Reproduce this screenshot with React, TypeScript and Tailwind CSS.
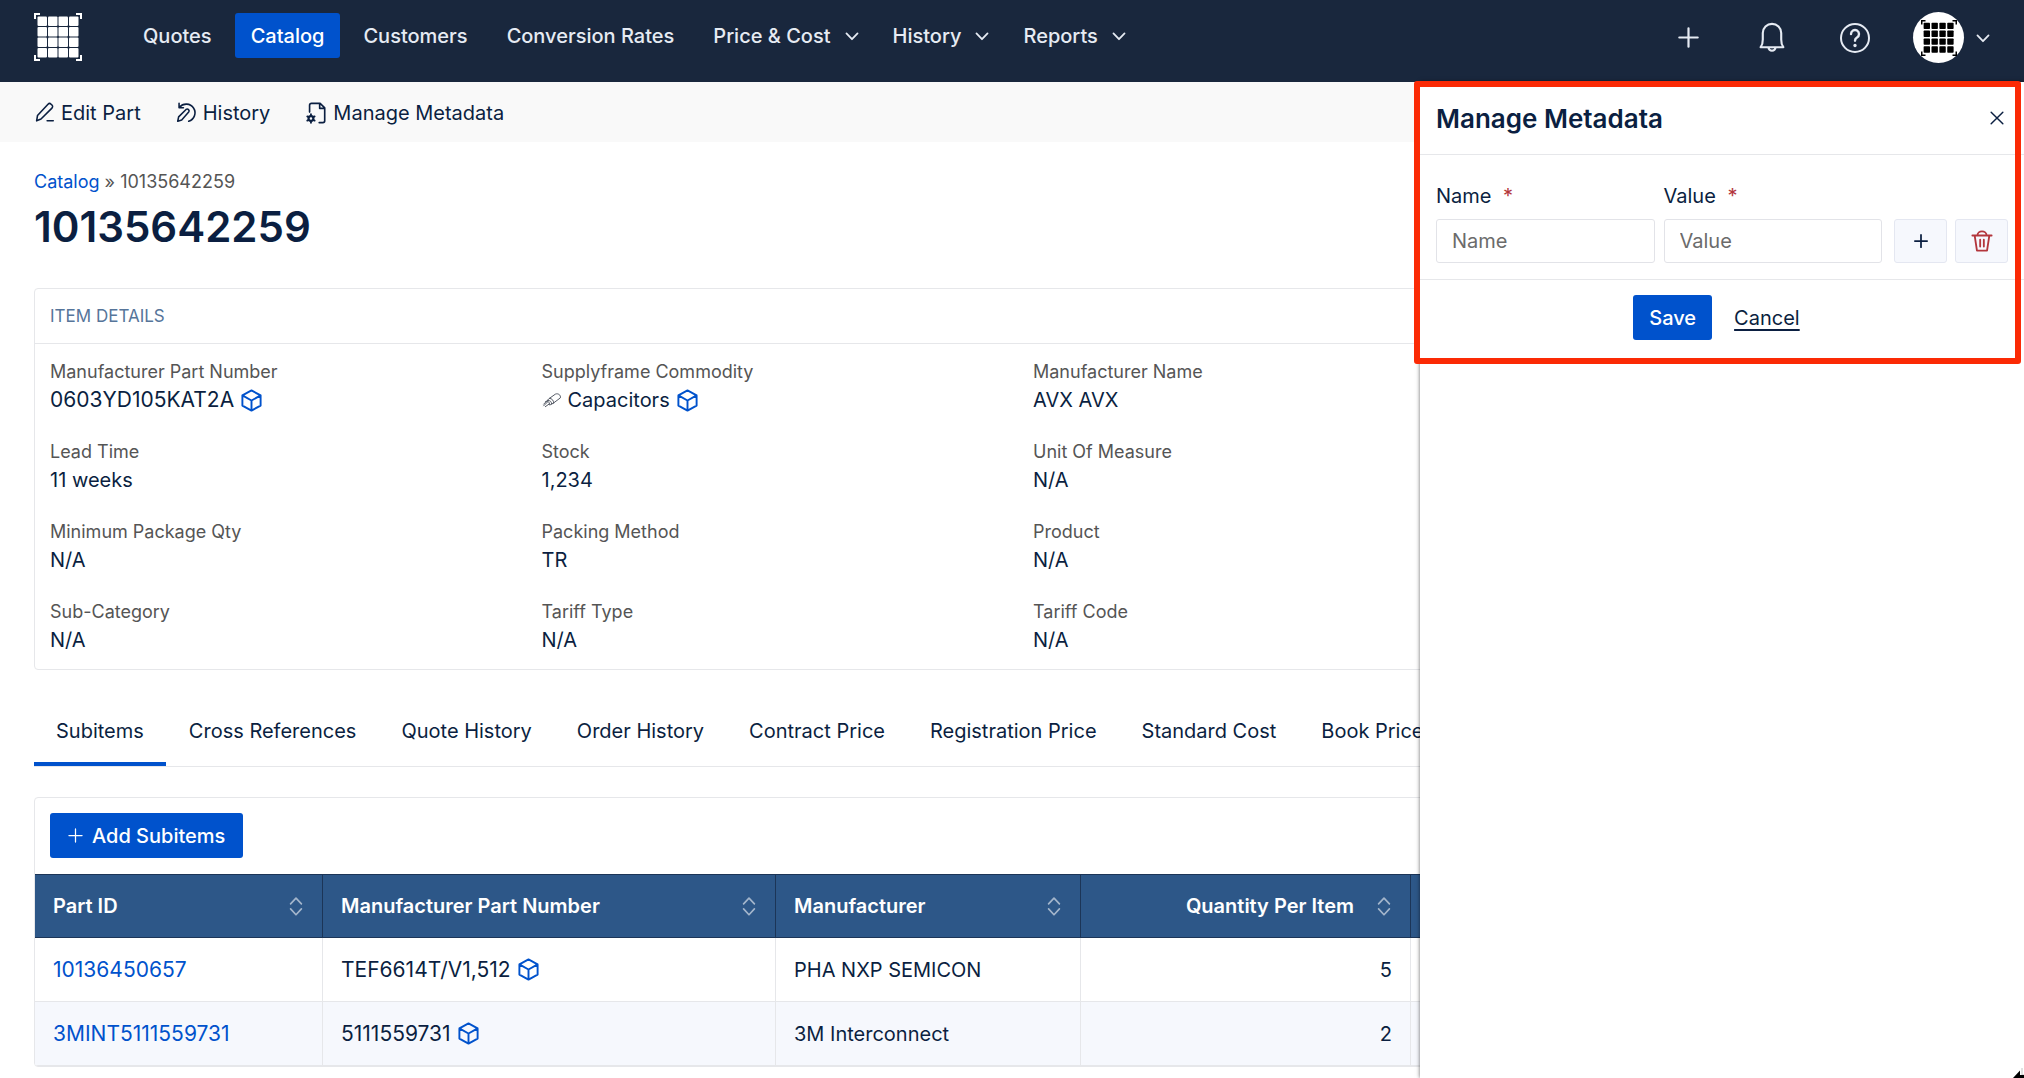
import { useState } from 'react';
import type { ReactNode } from 'react';

type Cell = { label: string; value: string; commodity?: boolean; model?: boolean };

const details: Cell[] = [
  { label: 'Manufacturer Part Number', value: '0603YD105KAT2A', model: true },
  { label: 'Supplyframe Commodity', value: 'Capacitors', commodity: true, model: true },
  { label: 'Manufacturer Name', value: 'AVX AVX' },
  { label: 'Lead Time', value: '11 weeks' },
  { label: 'Stock', value: '1,234' },
  { label: 'Unit Of Measure', value: 'N/A' },
  { label: 'Minimum Package Qty', value: 'N/A' },
  { label: 'Packing Method', value: 'TR' },
  { label: 'Product', value: 'N/A' },
  { label: 'Sub-Category', value: 'N/A' },
  { label: 'Tariff Type', value: 'N/A' },
  { label: 'Tariff Code', value: 'N/A' }
];

const navItems = [
  { name: 'Quotes' },
  { name: 'Catalog' },
  { name: 'Customers' },
  { name: 'Conversion Rates' },
  { name: 'Price & Cost', menu: true },
  { name: 'History', menu: true },
  { name: 'Reports', menu: true }
];

const tabs = [
  'Subitems',
  'Cross References',
  'Quote History',
  'Order History',
  'Contract Price',
  'Registration Price',
  'Standard Cost',
  'Book Price'
];

const subitems = [
  { id: '10136450657', mpn: 'TEF6614T/V1,512', manufacturer: 'PHA NXP SEMICON', qty: 5 },
  { id: '3MINT5111559731', mpn: '5111559731', manufacturer: '3M Interconnect', qty: 2 }
];

function Icon({ className, width = 1.5, children }: { className: string; width?: number; children: ReactNode }) {
  return (
    <svg
      viewBox="0 0 24 24"
      fill="none"
      stroke="currentColor"
      strokeWidth={width}
      strokeLinecap="round"
      strokeLinejoin="round"
      className={`shrink-0 ${className}`}
      aria-hidden="true"
    >
      {children}
    </svg>
  );
}

function Chevron({ className }: { className: string }) {
  return (
    <Icon className={className} width={3}>
      <path d="M2.5 7.5l9.5 10 9.5-10" />
    </Icon>
  );
}

function Plus({ className, width = 2 }: { className: string; width?: number }) {
  return (
    <Icon className={className} width={width}>
      <path d="M12 1.5v21M1.5 12h21" />
    </Icon>
  );
}

function Cube() {
  return (
    <Icon className="h-[23px] w-[23px] text-[#0052cc]" width={2}>
      <path d="M12 1.5l9.5 5.2v10.6L12 22.5l-9.5-5.2V6.7zM2.5 6.7L12 12l9.5-5.3M12 12v10.5" />
    </Icon>
  );
}

function Capacitor() {
  return (
    <Icon className="h-5 w-5 text-[#555b66]" width={1.2}>
      <path d="M9 10l7-5c3-1.5 7 1 6 4.5l-8 6" />
      <path d="M9 10c3 0 5 2.5 5 5.5M9 10c-2 1-3 3-3 4.5M7 12.5c3 0 4.5 1.5 4.5 4.5l2.5-1.5M11.5 17c-1 1-2.5 1-3.5.5M4 14c2-1.5 5-.5 5 3M2 19l4-4M4 20l5-3.5M2 17l4-4" />
    </Icon>
  );
}

function Sorter() {
  return (
    <Icon className="h-5 w-5 text-[#a3b5cb]" width={2}>
      <path d="M5.5 9.500L12 2.500l6.500 7M5.500 15.500l6.500 7 6.500-7" />
    </Icon>
  );
}

function GridLogo({ className, cell = 9.5 }: { className: string; cell?: number }) {
  const steps = [0, 1, 2, 3];
  return (
    <svg viewBox="0 0 48 48" className={`shrink-0 ${className}`} aria-hidden="true">
      <g fill="currentColor">
        {steps.map((r) =>
          steps.map((c) => <rect key={`${r}-${c}`} x={3.5 + c * 10.5} y={3.5 + r * 10.5} width={cell} height={cell} rx="1" />)
        )}
      </g>
      <path d="M1 6V1h5M42 1h5v5M47 42v5h-5M6 47H1v-5" fill="none" stroke="currentColor" strokeWidth="2" />
    </svg>
  );
}

function Navbar() {
  return (
    <header className="flex h-[82px] items-start justify-between bg-[#19273d] px-[34px] pt-3 text-[#e6ebf3]">
      <div className="flex items-start pt-px">
        <GridLogo className="h-12 w-12 text-white" />
        <nav className="ml-[45px] flex gap-[7px]">
          {navItems.map((item) => (
            <a
              key={item.name}
              href="#"
              className={`flex h-[45px] items-center rounded-[3px] text-[20px] font-medium ${item.menu ? 'pr-[11px] pl-4' : 'px-4'} ${
                item.name === 'Catalog' ? 'bg-[#0052cc] text-white' : ''
              }`}
            >
              {item.name}
              {item.menu && <Chevron className="ml-[14px] h-[14px] w-[14px]" />}
            </a>
          ))}
        </nav>
      </div>
      <div className="flex items-center">
        <button aria-label="Create" className="mr-14">
          <Plus className="h-[21px] w-[21px]" width={2.5} />
        </button>
        <button aria-label="Notifications" className="mr-[50px]">
          <Icon className="h-[34px] w-[34px]">
            <path d="M4 18.500h16c-1.200-1.500-1.500-3.500-1.500-5.500V8.500a6.500 6.500 0 0 0-13 0V13c0 2-.3 4-1.500 5.500zM9.500 18.500a2.500 2.500 0 0 0 5 0" />
          </Icon>
        </button>
        <button aria-label="Help" className="mr-[42px]">
          <Icon className="h-8 w-8">
            <circle cx="12" cy="12" r="10.5" />
            <path d="M9 9a3 3 0 1 1 4.500 2.600c-1 .6-1.500 1.200-1.500 2.400" strokeWidth="1.8" />
            <path d="M12 17.500v.1" strokeWidth="2.5" />
          </Icon>
        </button>
        <button aria-label="Account" className="flex items-center gap-3">
          <span className="flex h-[51px] w-[51px] items-center justify-center rounded-full bg-white text-black">
            <GridLogo className="h-9 w-9" cell={8.5} />
          </span>
          <Chevron className="h-[14px] w-[14px]" />
        </button>
      </div>
    </header>
  );
}

function Toolbar() {
  return (
    <div className="flex h-[60px] items-center gap-[35px] bg-[#f9f9f9] px-[34px] pt-px text-[20px]">
      <button className="flex items-center gap-[6px]">
        <Icon className="h-[21px] w-[21px]" width={1.8}>
          <path d="M3 21.5l1-6L16 2.500c1-1 2.500-1 3.500 0l1 1c1 1 1 2.500 0 3.500L8 19.500zM15 21.500h7" />
        </Icon>
        Edit Part
      </button>
      <button className="flex items-center gap-[6px]">
        <Icon className="h-[21px] w-[21px]" width={1.8}>
          <path d="M3.5 1.500v5h5M4 6A10 10 0 1 1 14.500 22M2 22l1-5 8.500-8.500c2-1.500 4.500 1 3 3L6.500 20.500z" />
        </Icon>
        History
      </button>
      <button className="flex items-center gap-[6px]">
        <Icon className="h-[22px] w-[22px]" width={1.8}>
          <path d="M5 11V3.500a2 2 0 0 1 2-2h9.500l5 5v14a2 2 0 0 1-2 2h-4M16 1.500V7h5.500" />
          <circle cx="6.5" cy="18" r="2.6" strokeWidth="2.4" />
          <path d="M6.500 13.400v1M6.500 21.600v1M2.500 15.700l.9.500M9.600 19.800l.9.500M2.500 20.300l.9-.5M9.600 16.200l.9-.5" strokeWidth="2" />
        </Icon>
        Manage Metadata
      </button>
    </div>
  );
}

function ItemDetails() {
  return (
    <section className="mt-[33px] rounded border border-[#e6e7ea]">
      <h2 className="border-b border-[#e6e7ea] px-[15px] py-[15px] text-[17px] leading-6 text-[#56759a] uppercase">Item Details</h2>
      <dl className="grid grid-cols-4 gap-x-[42px] gap-y-[23px] px-[15px] py-[14px]">
        {details.map((d, i) => (
          <div key={d.label} className={i % 3 === 2 ? 'col-span-2' : ''}>
            <dt className="text-[18px] leading-[27px] text-[#555]">{d.label}</dt>
            <dd className={`flex h-[30px] items-center gap-[6px] ${d.model && !d.commodity ? 'text-[21px]' : 'text-[20px]'}`}>
              {d.commodity && <Capacitor />}
              {d.value}
              {d.model && <Cube />}
            </dd>
          </div>
        ))}
      </dl>
    </section>
  );
}

function SubitemsTable() {
  const head = 'border-y border-r border-[#1c3557] pr-4 pl-[18px] font-semibold';
  const cell = 'border-r border-b border-[#e6e7ea] px-[18px]';
  return (
    <section className="mt-[30px] overflow-hidden rounded border border-[#e6e7ea]">
      <div className="px-[15px] pt-[15px] pb-4">
        <button className="flex h-[45px] items-center gap-[9px] rounded-[3px] bg-[#0052cc] px-[18px] text-[20px] font-medium text-white">
          <Plus className="h-[15px] w-[15px]" />
          Add Subitems
        </button>
      </div>
      <table className="w-full table-fixed border-separate border-spacing-0 text-left text-[20px]">
        <colgroup>
          <col className="w-[288px]" />
          <col className="w-[453px]" />
          <col className="w-[305px]" />
          <col className="w-[330px]" />
          <col />
        </colgroup>
        <thead className="bg-[#2d5788] text-white">
          <tr className="h-16">
            {['Part ID', 'Manufacturer Part Number', 'Manufacturer', 'Quantity Per Item'].map((h) => (
              <th key={h} className={head}>
                <div className="flex items-center">
                  <span className={`grow ${h === 'Quantity Per Item' ? 'pr-5 text-right' : ''}`}>{h}</span>
                  <Sorter />
                </div>
              </th>
            ))}
            <th className={head} aria-label="Actions" />
          </tr>
        </thead>
        <tbody>
          {subitems.map((row) => (
            <tr key={row.id} className="h-16 even:bg-[#f6f8fd]">
              <td className={`${cell} text-[21px]`}>
                <a href="#" className="text-[#0052cc]">{row.id}</a>
              </td>
              <td className={`${cell} text-[21px]`}>
                <div className="flex items-center gap-[6px]">
                  {row.mpn}
                  <Cube />
                </div>
              </td>
              <td className={cell}>{row.manufacturer}</td>
              <td className={`${cell} text-right`}>{row.qty}</td>
              <td className={cell} />
            </tr>
          ))}
        </tbody>
      </table>
    </section>
  );
}

function Field({ label, value, onChange }: { label: string; value: string; onChange: (v: string) => void }) {
  const id = `metadata-${label.toLowerCase()}`;
  return (
    <div className="min-w-0 flex-1">
      <label htmlFor={id} className="block text-[20px] leading-[30px]">
        {label} <span className="ml-[6px] text-[#b3363c]">*</span>
      </label>
      <input
        id={id}
        placeholder={label}
        value={value}
        onChange={(e) => onChange(e.target.value)}
        className="mt-2 block h-11 w-full rounded-[3px] border border-[#e2e3e8] px-[15px] text-[20px] placeholder:text-[#6b6b6b]"
      />
    </div>
  );
}

function MetadataDrawer({ onClose }: { onClose: () => void }) {
  const [name, setName] = useState('');
  const [value, setValue] = useState('');
  const square = 'flex h-11 w-[53px] items-center justify-center rounded-[3px] border border-[#e4e7f1] bg-[#f6f8fd]';

  return (
    <aside className="absolute top-[82px] right-0 bottom-0 w-[604px] bg-white shadow-[0_0_4px_rgba(0,0,0,0.6)]">
      <form onSubmit={(e) => e.preventDefault()}>
        <div className="flex h-[73px] items-center justify-between border-b border-[#e6e7ea] pr-5 pl-4">
          <h2 className="text-[26px] font-semibold">Manage Metadata</h2>
          <button type="button" aria-label="Close" onClick={onClose}>
            <Icon className="h-[14px] w-[14px]" width={2.5}>
              <path d="M2 2l20 20M22 2L2 22" />
            </Icon>
          </button>
        </div>
        <div className="flex items-end border-b border-[#e6e7ea] px-4 pt-[26px] pb-4">
          <div className="flex min-w-0 grow gap-[9px]">
            <Field label="Name" value={name} onChange={setName} />
            <Field label="Value" value={value} onChange={setValue} />
          </div>
          <div className="ml-3 flex gap-2">
            <button type="button" aria-label="Add row" className={square}>
              <Plus className="h-[14px] w-[14px]" width={3} />
            </button>
            <button type="button" aria-label="Delete row" className={`${square} text-[#b3363c]`}>
              <Icon className="h-[22px] w-[22px]" width={2}>
                <path d="M1.500 6h21M7 6c0-6 10-6 10 0M4 6l2.500 16.500h11L20 6M10 10.500v7.500M14 10.500v7.500" />
              </Icon>
            </button>
          </div>
        </div>
        <div className="flex items-center justify-center gap-[22px] py-[15px] pr-[11px] text-[20px]">
          <button type="submit" className="h-[45px] rounded-[3px] bg-[#0052cc] px-4 font-medium text-white">Save</button>
          <button type="button" onClick={onClose} className="underline underline-offset-4">Cancel</button>
        </div>
      </form>
      {/* highlight frame around the form */}
      <div className="pointer-events-none absolute -top-px -left-[6px] h-[283px] w-[607px] rounded-[3px] border-6 border-[#fb2a05]" />
      {/* resize pointer peeking in at the corner */}
      <svg viewBox="0 0 14 12" className="absolute right-0 bottom-0 h-3 w-[14px]" aria-hidden="true">
        <path d="M3 12L10 4.500V12z" />
        <path d="M12 2v7h2" fill="none" stroke="#c4c4c4" strokeWidth="1" />
        <path d="M10 9h4v3h-4z" />
      </svg>
    </aside>
  );
}

export default function App() {
  const [open, setOpen] = useState(true);

  return (
    <div className="relative min-h-screen overflow-hidden bg-white font-['Inter',sans-serif] text-[#0b1f41]">
      <Navbar />
      <Toolbar />
      <main className="px-[34px] pt-[26px]">
        <nav className="text-[18px] leading-7 text-[#555]">
          <a href="#" className="text-[#0052cc]">Catalog</a> » 10135642259
        </nav>
        <h1 className="mt-[3px] text-[42px] leading-[56px] font-semibold">10135642259</h1>
        <ItemDetails />
        <div role="tablist" className="mt-[30px] flex gap-px border-b border-[#e6e7ea]">
          {tabs.map((t, i) => (
            <button
              key={t}
              role="tab"
              aria-selected={i === 0}
              className={`shrink-0 border-b-4 px-[22px] py-4 text-[20px] leading-[30px] ${
                i === 0 ? 'border-[#0052cc]' : 'border-transparent'
              }`}
            >
              {t}
            </button>
          ))}
        </div>
        <SubitemsTable />
      </main>
      {open && <MetadataDrawer onClose={() => setOpen(false)} />}
    </div>
  );
}
